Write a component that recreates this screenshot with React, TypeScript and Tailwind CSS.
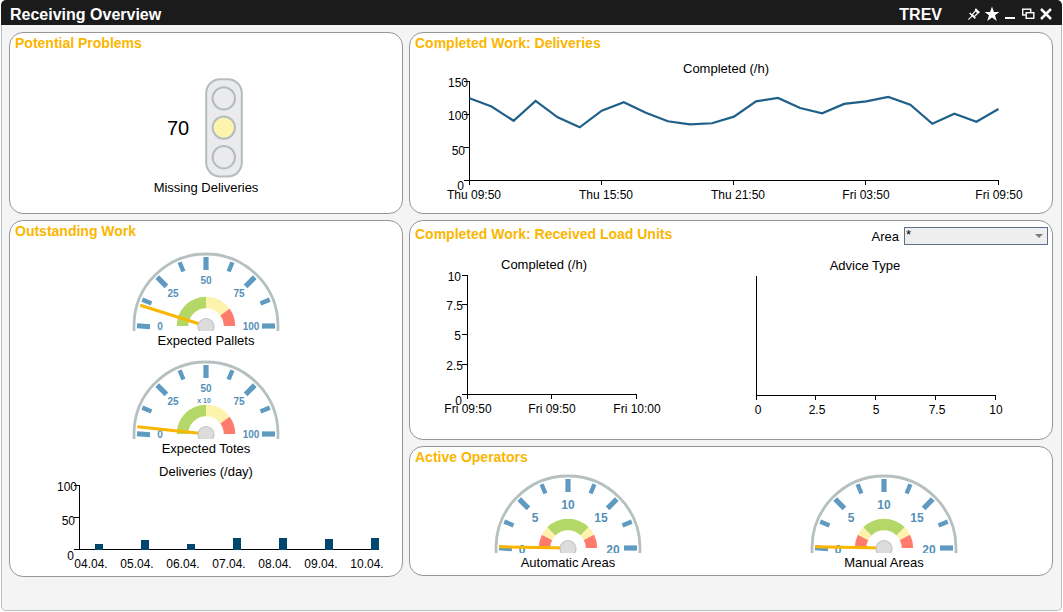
import React from "react";

const AXIS = "#000000";

type Point = { x: number; y: number; text: string };

function AxisLabels({ items, anchor }: { items: Point[]; anchor: "middle" | "end" }) {
  return (
    <g className="text-[12px]" fill={AXIS} textAnchor={anchor}>
      {items.map((p, i) => (
        <text key={i} x={p.x} y={p.y}>
          {p.text}
        </text>
      ))}
    </g>
  );
}

function Panel({ title, aside, children }: { title: string; aside?: React.ReactNode; children: React.ReactNode }) {
  return (
    <section className="rounded-[14px] border border-[#969696] bg-white">
      <div className={aside ? "flex items-start justify-between pt-[3px] pr-1 pl-[5px]" : "flex pl-[5px]"}>
        <h2 className="text-sm leading-5 font-bold text-[#fab600]">{title}</h2>
        {aside}
      </div>
      {children}
    </section>
  );
}

function TrafficLight() {
  return (
    <svg width="38" height="100" viewBox="0 0 38 100" aria-label="Warning">
      <rect x="1.2" y="1.2" width="35.6" height="97.4" rx="14" fill="#ebebee" stroke="#b3bdbd" strokeWidth="2" />
      <circle cx="18.8" cy="20.4" r="11.2" fill="#ebebee" stroke="#b3bdbd" strokeWidth="2" />
      <circle cx="18.8" cy="49.6" r="11.2" fill="#fdf3ac" stroke="#b3bdbd" strokeWidth="2" />
      <circle cx="18.8" cy="79.2" r="11.2" fill="#ebebee" stroke="#b3bdbd" strokeWidth="2" />
    </svg>
  );
}

const CX = 75;
const CY = 74;

function polar(r: number, deg: number) {
  const a = (deg * Math.PI) / 180;
  return { x: CX - r * Math.cos(a), y: CY - r * Math.sin(a) };
}

function arc(r: number, from: number, to: number) {
  const a = polar(r, from);
  const b = polar(r, to);
  return `M${a.x} ${a.y} A${r} ${r} 0 0 1 ${b.x} ${b.y}`;
}

type Band = { from: number; to: number; color: string };

const GREEN = "#b3d867";
const YELLOW = "#fdf3ac";
const RED = "#ff7b6c";

const LOAD_BANDS: Band[] = [
  { from: 0, to: 90, color: GREEN },
  { from: 90, to: 144, color: YELLOW },
  { from: 144, to: 180, color: RED },
];

const STAFF_BANDS: Band[] = [
  { from: 0, to: 27, color: RED },
  { from: 27, to: 45, color: YELLOW },
  { from: 45, to: 135, color: GREEN },
  { from: 135, to: 153, color: YELLOW },
  { from: 153, to: 180, color: RED },
];

function Gauge({
  caption,
  labels,
  bands,
  needle,
  factor,
  large,
}: {
  caption: string;
  labels: string[];
  bands: Band[];
  needle: number;
  factor?: string;
  large?: boolean;
}) {
  const drop = large ? 7 : 4;
  const endDrop = large ? 6 : 4;
  const spots = [
    { x: CX - 46, y: CY + endDrop },
    { x: CX - 33, y: CY - 33 + drop },
    { x: CX, y: CY - 46 + drop },
    { x: CX + 33, y: CY - 33 + drop },
    { x: CX + 45, y: CY + endDrop },
  ];
  const tip = polar(69, needle);
  return (
    <figure className="flex flex-col items-center">
      <svg width="150" height="79" viewBox="0 0 150 79">
        <circle cx={CX} cy={CY} r="72" fill="white" stroke="#b6c0c0" strokeWidth="2.8" />
        {bands.map((b) => (
          <path key={b.from} d={arc(23.5, b.from, b.to)} fill="none" stroke={b.color} strokeWidth="11.5" />
        ))}
        <g stroke="#5f9ac0">
          <line x1={CX - 69} y1={CY - 0.3} x2={CX - 56} y2={CY + 0.8} strokeWidth="5" />
          {[45, 90, 135, 180].map((d) => {
            const a = polar(56, d);
            const b = polar(69, d);
            return <line key={d} x1={a.x} y1={a.y} x2={b.x} y2={b.y} strokeWidth="5.2" />;
          })}
          {[22.5, 67.5, 112.5, 157.5].map((d) => {
            const a = polar(59, d);
            const b = polar(69, d);
            return <line key={d} x1={a.x} y1={a.y} x2={b.x} y2={b.y} strokeWidth="4.4" />;
          })}
        </g>
        <g className={large ? "text-[12px] font-bold" : "text-[10px] font-bold"} fill="#5590b8" textAnchor="middle">
          {labels.map((l, i) => (
            <text key={l} x={spots[i].x} y={spots[i].y}>
              {l}
            </text>
          ))}
          {factor && (
            <text x={CX - 2} y={CY - 31} className="text-[7px]">
              {factor}
            </text>
          )}
        </g>
        <line x1={CX} y1={CY} x2={tip.x} y2={tip.y} stroke="#fab600" strokeWidth="3" />
        <circle cx={CX} cy={CY + 0.5} r="8" fill="#dcdcdc" stroke="#bfc5c7" strokeWidth="1.2" />
      </svg>
      <figcaption className="text-[13px] leading-5">{caption}</figcaption>
    </figure>
  );
}

const PER_DAY = [
  { day: "04.04.", height: 6 },
  { day: "05.04.", height: 10 },
  { day: "06.04.", height: 6 },
  { day: "07.04.", height: 12 },
  { day: "08.04.", height: 12 },
  { day: "09.04.", height: 11 },
  { day: "10.04.", height: 12 },
];

function DayChart() {
  return (
    <figure className="mt-[3px] flex flex-col items-center">
      <figcaption className="text-[13px] leading-5">Deliveries (/day)</figcaption>
      <svg width="360" height="94" viewBox="0 0 360 94">
        <path
          d="M48 3.5H53.5V67.5M48 35.5H53M48 67.5H353"
          fill="none"
          stroke={AXIS}
          shapeRendering="crispEdges"
        />
        {PER_DAY.map((d, i) => (
          <rect key={d.day} x={69 + i * 46} y={68 - d.height} width="8" height={d.height} fill="#00466f" />
        ))}
        <AxisLabels
          anchor="end"
          items={[
            { x: 51, y: 9, text: "100" },
            { x: 49, y: 43, text: "50" },
            { x: 48, y: 78, text: "0" },
          ]}
        />
        <AxisLabels anchor="middle" items={PER_DAY.map((d, i) => ({ x: 65 + i * 46, y: 86, text: d.day }))} />
      </svg>
    </figure>
  );
}

const PER_HOUR = [
  124.5, 112, 90.5, 120.5, 95.8, 80.6, 105.8, 118.5, 102.7, 89.7, 85, 86.7, 96.7, 120, 125, 109.8, 101.8, 116, 120,
  126.5, 115, 86, 101.2, 89, 108.3,
];

function HourChart() {
  const points = PER_HOUR.map((v, i) => `${38.5 + i * 22.04},${127.5 - v * 0.66}`).join(" ");
  return (
    <svg className="mx-auto block" width="600" height="160" viewBox="0 0 600 160">
      <text x="295" y="20" textAnchor="middle" className="text-[13px]">
        Completed (/h)
      </text>
      <path
        d="M33 28.5H38.5V132M33 61.5H38M33 94.5H38M33 127.5H567.5V132M170.5 127V132M302.5 127V132M434.5 127V132"
        fill="none"
        stroke={AXIS}
        shapeRendering="crispEdges"
      />
      <polyline points={points} fill="none" stroke="#1f6088" strokeWidth="2.2" />
      <AxisLabels
        anchor="end"
        items={[
          { x: 37, y: 34, text: "150" },
          { x: 37, y: 67, text: "100" },
          { x: 34, y: 102, text: "50" },
          { x: 33, y: 137, text: "0" },
        ]}
      />
      <AxisLabels
        anchor="middle"
        items={[
          { x: 43, y: 146, text: "Thu 09:50" },
          { x: 175, y: 146, text: "Thu 15:50" },
          { x: 307, y: 146, text: "Thu 21:50" },
          { x: 435, y: 146, text: "Fri 03:50" },
          { x: 568, y: 146, text: "Fri 09:50" },
        ]}
      />
    </svg>
  );
}

function LoadUnitChart() {
  return (
    <svg width="300" height="194" viewBox="0 0 300 194">
      <text x="126" y="24" textAnchor="middle" className="text-[13px]">
        Completed (/h)
      </text>
      <path
        d="M44 30.5H49.5V154M44 59.5H49M44 89.5H49M44 119.5H49M44 149.5H218.5V154M133.5 149V154"
        fill="none"
        stroke={AXIS}
        shapeRendering="crispEdges"
      />
      <AxisLabels
        anchor="end"
        items={[
          { x: 43, y: 36, text: "10" },
          { x: 45, y: 65, text: "7.5" },
          { x: 43, y: 95, text: "5" },
          { x: 45, y: 125, text: "2.5" },
          { x: 44, y: 160, text: "0" },
        ]}
      />
      <AxisLabels
        anchor="middle"
        items={[
          { x: 50, y: 168, text: "Fri 09:50" },
          { x: 134, y: 168, text: "Fri 09:50" },
          { x: 219, y: 168, text: "Fri 10:00" },
        ]}
      />
    </svg>
  );
}

function AdviceChart() {
  return (
    <svg width="300" height="194" viewBox="0 0 300 194">
      <text x="131" y="25" textAnchor="middle" className="text-[13px]">
        Advice Type
      </text>
      <path
        d="M22.5 31V155M22 150.5H261.5V155M81.5 150V155M141.5 150V155M201.5 150V155"
        fill="none"
        stroke={AXIS}
        shapeRendering="crispEdges"
      />
      <AxisLabels
        anchor="middle"
        items={[
          { x: 24, y: 169, text: "0" },
          { x: 83, y: 169, text: "2.5" },
          { x: 142, y: 169, text: "5" },
          { x: 203, y: 169, text: "7.5" },
          { x: 262, y: 169, text: "10" },
        ]}
      />
    </svg>
  );
}

function AreaFilter() {
  return (
    <div className="flex items-start gap-[5px] pt-[3px]">
      <label htmlFor="area" className="text-[13px] leading-5">
        Area
      </label>
      <div className="relative flex">
        <select
          id="area"
          defaultValue="*"
          className="h-[18px] w-36 appearance-none border border-[#5f6c88] bg-[#eeeeee] pb-[2px] pl-px text-[13px] leading-[14px] text-black"
        >
          <option value="*">*</option>
        </select>
        <svg className="pointer-events-none absolute top-[7px] right-[5px]" width="8" height="4" viewBox="0 0 8 4">
          <path d="M0 0H8L4 4Z" fill="#7d7d7d" />
        </svg>
      </div>
    </div>
  );
}

function ToolButton({ label, children }: { label: string; children: React.ReactNode }) {
  return (
    <button type="button" aria-label={label} className="flex w-[18px] justify-center">
      <svg width="16" height="16" viewBox="0 0 16 16" fill="none" stroke="white">
        {children}
      </svg>
    </button>
  );
}

function TitleBar() {
  return (
    <header className="flex h-[25px] items-end rounded-t-[5px] bg-[#1b1b1b] pr-[7px] pl-[9px] text-white">
      <h1 className="flex-1 text-base leading-5 font-bold">Receiving Overview</h1>
      <span className="mr-[23px] text-base leading-5 font-bold">TREV</span>
      <div className="flex pb-[3px]">
        <ToolButton label="Pin">
          <path d="M2.4 13.6L6.6 9.4" strokeWidth="1.1" />
          <path d="M3.6 7L9.4 12.4" strokeWidth="1.5" />
          <path d="M6.3 8.6L9.6 4.6L12 7L8.3 10.6Z" strokeWidth="1.2" />
          <path d="M9.3 2.8L13.4 6.9" strokeWidth="1.7" />
        </ToolButton>
        <ToolButton label="Favourite">
          <path
            d="M8 0.6L9.9 5.9H15.4L11 9.2L12.8 15L8 11.6L3.2 15L5 9.2L0.6 5.9H6.1Z"
            fill="white"
            stroke="none"
          />
        </ToolButton>
        <ToolButton label="Minimise">
          <path d="M3 12H13" strokeWidth="2" />
        </ToolButton>
        <ToolButton label="Restore">
          <rect x="2.7" y="3.2" width="8" height="5.8" strokeWidth="1.4" />
          <rect x="6.2" y="6.7" width="7.6" height="5.6" strokeWidth="1.4" fill="#1b1b1b" />
        </ToolButton>
        <ToolButton label="Close">
          <path d="M3 3L13 13M13 3L3 13" strokeWidth="2.5" />
        </ToolButton>
      </div>
    </header>
  );
}

const HUNDRED = ["0", "25", "50", "75", "100"];
const TWENTY = ["0", "5", "10", "15", "20"];

export default function App() {
  return (
    <div className="flex min-h-screen flex-col bg-white px-px pb-px font-['Liberation_Sans',Arial,sans-serif] text-black">
      <TitleBar />
      <main className="grid flex-1 grid-cols-[394fr_644fr] items-start gap-[6px] rounded-b-[5px] border-x border-b border-[#b4c0c8] bg-[#f4f4f4] pt-[7px] pr-2 pb-4 pl-[7px]">
        <div className="flex flex-col gap-[6px]">
          <Panel title="Potential Problems">
            <div className="flex flex-col items-center pt-[25px] pb-[15px]">
              <div className="flex items-center gap-4 pr-[2px]">
                <span className="text-xl leading-6">70</span>
                <TrafficLight />
              </div>
              <p className="text-[13px] leading-5">Missing Deliveries</p>
            </div>
          </Panel>
          <Panel title="Outstanding Work">
            <div className="flex flex-col items-center gap-[9px] pt-[11px]">
              <Gauge caption="Expected Pallets" labels={HUNDRED} bands={LOAD_BANDS} needle={17.5} />
              <Gauge caption="Expected Totes" labels={HUNDRED} bands={LOAD_BANDS} needle={6} factor="x 10" />
            </div>
            <DayChart />
          </Panel>
        </div>
        <div className="flex flex-col gap-[6px]">
          <Panel title="Completed Work: Deliveries">
            <HourChart />
          </Panel>
          <Panel title="Completed Work: Received Load Units" aside={<AreaFilter />}>
            <div className="-mt-[2px] grid grid-cols-2 justify-items-center pr-[10px]">
              <LoadUnitChart />
              <AdviceChart />
            </div>
          </Panel>
          <Panel title="Active Operators">
            <div className="grid grid-cols-2 pt-[7px] pr-[10px] pb-[2px]">
              <Gauge caption="Automatic Areas" labels={TWENTY} bands={STAFF_BANDS} needle={1} large />
              <Gauge caption="Manual Areas" labels={TWENTY} bands={STAFF_BANDS} needle={1} large />
            </div>
          </Panel>
        </div>
      </main>
    </div>
  );
}
